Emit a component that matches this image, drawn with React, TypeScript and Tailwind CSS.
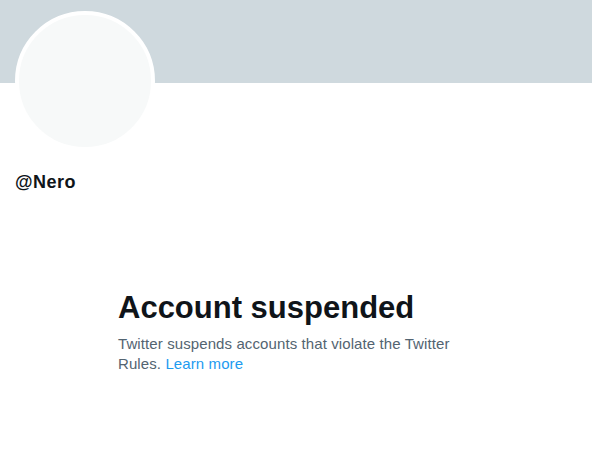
export default function App() {
  return (
    <div
      className="w-[592px] h-[449px] bg-white overflow-hidden"
      style={{ fontFamily: '"Liberation Sans", Arial, sans-serif' }}
    >
      <div className="h-[83px] bg-[#cfd9de]" />
      <div className="pl-[15px] -mt-[72px]">
        <div className="w-[140px] h-[140px] rounded-full border-4 border-white bg-[#f7f9f9]" />
      </div>
      <div className="pl-[15px] mt-[21px] text-[18px] leading-[20px] font-bold tracking-[0.5px] text-[#0f1419]">
        @Nero
      </div>
      <div className="w-[356px] mx-auto mt-[98px]">
        <h1 className="text-[31px] leading-[36px] font-bold text-[#0f1419] mb-2">
          Account suspended
        </h1>
        <p className="text-[15px] leading-[20px] text-[#536471] tracking-[0.1px]">
          Twitter suspends accounts that violate the Twitter Rules.{" "}
          <span className="text-[#1d9bf0]">Learn more</span>
        </p>
      </div>
    </div>
  );
}
